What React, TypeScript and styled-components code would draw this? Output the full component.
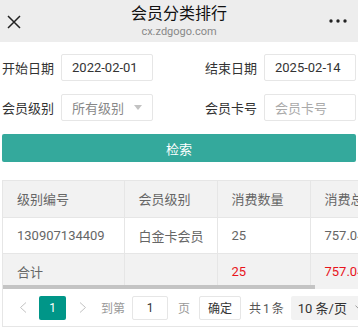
import React from 'react';
import styled, { createGlobalStyle } from 'styled-components';

const GlobalStyle = createGlobalStyle`
  html, body {
    margin: 0;
    padding: 0;
    background: #fff;
    overflow: hidden;
  }
  body {
    font-family: Roboto, "Noto Sans CJK SC", sans-serif;
    color: #333;
  }
  * {
    box-sizing: border-box;
  }
`;

const rows = [
  { code: '130907134409', level: '白金卡会员', count: '25', amount: '757.04' },
];

const App = () => {
  return (
    <Page>
      <GlobalStyle />
      <NavBar>
        <NavIcon>
          <svg width="14" height="14" viewBox="0 0 14 14">
            <path d="M1 1 L13 13 M13 1 L1 13" stroke="#222" strokeWidth="1.5" fill="none" />
          </svg>
        </NavIcon>
        <NavTitle>
          <Title>会员分类排行</Title>
          <SubTitle>cx.zdgogo.com</SubTitle>
        </NavTitle>
        <NavIcon>
          <svg width="18" height="4" viewBox="0 0 18 4">
            <circle cx="2" cy="2" r="1.7" fill="#222" />
            <circle cx="9" cy="2" r="1.7" fill="#222" />
            <circle cx="16" cy="2" r="1.7" fill="#222" />
          </svg>
        </NavIcon>
      </NavBar>

      <Form>
        <FormRow>
          <Field>
            <Label>开始日期</Label>
            <Input>2022-02-01</Input>
          </Field>
          <Field>
            <Label>结束日期</Label>
            <Input>2025-02-14</Input>
          </Field>
        </FormRow>
        <FormRow>
          <Field>
            <Label>会员级别</Label>
            <Input muted>
              所有级别
              <Caret />
            </Input>
          </Field>
          <Field>
            <Label>会员卡号</Label>
            <Input placeholder>会员卡号</Input>
          </Field>
        </FormRow>
        <SearchButton>检索</SearchButton>
      </Form>

      <TableView>
        <TableScroll>
          <Table>
            <colgroup>
              <col style={{ width: 121 }} />
              <col style={{ width: 93 }} />
              <col style={{ width: 93 }} />
              <col style={{ width: 103 }} />
            </colgroup>
            <thead>
              <tr>
                <Th>级别编号</Th>
                <Th>会员级别</Th>
                <Th>消费数量</Th>
                <Th>消费总额</Th>
              </tr>
            </thead>
            <tbody>
              {rows.map((r) => (
                <tr key={r.code}>
                  <Td>{r.code}</Td>
                  <Td>{r.level}</Td>
                  <Td>{r.count}</Td>
                  <Td>{r.amount}</Td>
                </tr>
              ))}
              <TotalRow>
                <Td>合计</Td>
                <Td />
                <Td red>25</Td>
                <Td red>757.04</Td>
              </TotalRow>
            </tbody>
          </Table>
          <ScrollThumb />
        </TableScroll>

        <Pager>
          <PageArrow>
            <svg width="8" height="11" viewBox="0 0 8 11">
              <polyline points="7,0.5 1.5,5.5 7,10.5" stroke="#c2c2c2" strokeWidth="1" fill="none" />
            </svg>
          </PageArrow>
          <PageCurrent>1</PageCurrent>
          <PageArrow>
            <svg width="8" height="11" viewBox="0 0 8 11">
              <polyline points="1,0.5 6.5,5.5 1,10.5" stroke="#c2c2c2" strokeWidth="1" fill="none" />
            </svg>
          </PageArrow>
          <PagerText gap={5}>到第</PagerText>
          <PageInput>1</PageInput>
          <PagerText gap={10}>页</PagerText>
          <PageButton>确定</PageButton>
          <PagerCount>共 1 条</PagerCount>
          <PageSize>
            10 条/页
            <svg width="9" height="6" viewBox="0 0 9 6">
              <polyline points="0.5,0.5 4.5,4.5 8.5,0.5" stroke="#999" strokeWidth="1" fill="none" />
            </svg>
          </PageSize>
        </Pager>
      </TableView>
    </Page>
  );
};

export default App;

const Page = styled.div`
  width: 358px;
  height: 327px;
  overflow: hidden;
`;

const NavBar = styled.div`
  height: 42px;
  background: #ededed;
  display: grid;
  grid-template-columns: 40px 1fr 40px;
  align-items: center;
`;

const NavIcon = styled.div`
  display: flex;
  align-items: center;
  justify-content: center;
  &:first-child {
    justify-content: flex-start;
    padding-left: 7px;
    padding-top: 2px;
  }
  &:last-child {
    justify-content: flex-end;
    padding-right: 11px;
  }
`;

const NavTitle = styled.div`
  display: flex;
  flex-direction: column;
  align-items: center;
`;

const Title = styled.div`
  font-size: 16px;
  line-height: 18px;
  color: #111;
  font-family: "Noto Sans CJK SC", sans-serif;
`;

const SubTitle = styled.div`
  margin-top: 3px;
  font-size: 11px;
  line-height: 15px;
  color: #888;
`;

const Form = styled.div`
  padding: 12px 2px 0 2px;
`;

const FormRow = styled.div`
  display: flex;
  justify-content: space-between;
  align-items: center;
  margin-bottom: 13px;
`;

const Field = styled.div`
  display: flex;
  align-items: center;
  gap: 7px;
`;

const Label = styled.span`
  font-size: 13px;
  color: #333;
  font-family: "Noto Sans CJK SC", sans-serif;
`;

const Input = styled.div<{ muted?: boolean; placeholder?: boolean }>`
  width: 92px;
  height: 27px;
  border: 1px solid #e6e6e6;
  border-radius: 2px;
  padding: 0 10px;
  display: flex;
  align-items: center;
  justify-content: space-between;
  font-size: 13px;
  color: ${(p) => (p.placeholder ? '#aaa' : p.muted ? '#888' : '#333')};
`;

const Caret = styled.span`
  width: 0;
  height: 0;
  border-left: 4px solid transparent;
  border-right: 4px solid transparent;
  border-top: 5px solid #c2c2c2;
`;

const SearchButton = styled.div`
  height: 28px;
  background: #34a99c;
  border-radius: 2px;
  color: #fff;
  font-size: 13px;
  display: flex;
  align-items: center;
  justify-content: center;
`;

const TableView = styled.div`
  margin: 18px 0 0 2px;
  width: 380px;
  border: 1px solid #e6e6e6;
  border-right: none;
`;

const TableScroll = styled.div`
  position: relative;
  overflow: hidden;
`;

const Table = styled.table`
  border-collapse: collapse;
  table-layout: fixed;
  width: 410px;
  font-size: 13px;
  color: #666;
`;

const Th = styled.th`
  height: 36px;
  padding: 0 14px;
  text-align: left;
  font-weight: normal;
  background: #f2f2f2;
  border-right: 1px solid #e6e6e6;
  border-bottom: 1px solid #e6e6e6;
  white-space: nowrap;
  overflow: hidden;
`;

const Td = styled.td<{ red?: boolean }>`
  height: 36px;
  padding: 0 14px;
  border-right: 1px solid #e6e6e6;
  border-bottom: 1px solid #e6e6e6;
  white-space: nowrap;
  overflow: hidden;
  color: ${(p) => (p.red ? '#e8141c' : '#666')};
`;

const TotalRow = styled.tr`
  td {
    background: #f2f2f2;
    border-bottom: none;
  }
`;

const ScrollThumb = styled.div`
  position: absolute;
  left: 0;
  bottom: 0;
  width: 312px;
  height: 4px;
  background: #c4c4c4;
`;

const Pager = styled.div`
  height: 37px;
  display: flex;
  align-items: center;
  padding-left: 6px;
  white-space: nowrap;
  font-size: 12px;
  color: #666;
`;

const PageArrow = styled.div`
  width: 27px;
  height: 24px;
  display: flex;
  align-items: center;
  justify-content: center;
`;

const PageCurrent = styled.div`
  width: 27px;
  height: 24px;
  margin: 0 3px;
  border-radius: 2px;
  background: #009688;
  color: #fff;
  display: flex;
  align-items: center;
  justify-content: center;
`;

const PagerText = styled.span<{ gap: number }>`
  margin-left: ${(p) => p.gap}px;
  color: #999;
  font-family: "Noto Sans CJK SC", sans-serif;
`;

const PageInput = styled.div`
  width: 36px;
  height: 24px;
  margin-left: 7px;
  border: 1px solid #e6e6e6;
  border-radius: 2px;
  display: flex;
  align-items: center;
  justify-content: center;
  color: #333;
`;

const PageButton = styled.div`
  width: 42px;
  height: 24px;
  margin-left: 9px;
  border: 1px solid #e6e6e6;
  border-radius: 2px;
  display: flex;
  align-items: center;
  justify-content: center;
  color: #333;
  font-family: "Noto Sans CJK SC", sans-serif;
`;

const PagerCount = styled.span`
  margin-left: 8px;
  color: #555;
  word-spacing: -1px;
`;

const PageSize = styled.div`
  margin-left: 7px;
  width: 80px;
  height: 24px;
  padding: 0 7px;
  background: #f2f2f2;
  border-radius: 2px;
  display: flex;
  align-items: center;
  gap: 8px;
  color: #333;
  font-size: 13px;
`;
